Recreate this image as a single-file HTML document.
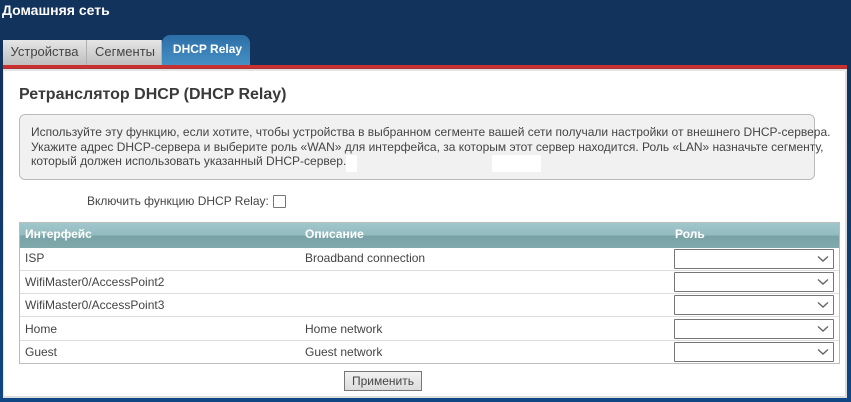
<!DOCTYPE html>
<html lang="ru"><head><meta charset="utf-8"><title>Домашняя сеть</title>
<style>
html,body{margin:0;padding:0}
body{width:851px;height:402px;position:relative;overflow:hidden;font-family:"Liberation Sans",Arial,sans-serif;font-size:12px;color:#444;background:linear-gradient(#12335c 0,#12335c 110px,#0f4684 402px)}
div,span{position:absolute;white-space:nowrap;box-sizing:border-box}
.tab{top:40px;height:25px;line-height:24px;text-align:center;font-size:13px;color:#444;background:linear-gradient(#e6e6e6,#bfbfbf);border-right:1px solid #b0b0b0}
.hd{top:223px;height:25px;line-height:23px;font-weight:bold;color:#fff}
.c{line-height:16px;color:#444}
.ln{left:20px;width:819px;height:1px;background:#ddd}
.sel{left:674px;width:160px;height:20px;border:1px solid #767676;border-radius:1px;background:#fff}
.sel svg{position:absolute;right:3px;top:5px}
.hl{background:#fff}
</style></head><body>
<div style="left:2px;top:2px;font-weight:bold;font-size:14px;line-height:16px;color:#fff">Домашняя сеть</div>

<div class="tab" style="left:3px;width:84px">Устройства</div>
<div class="tab" style="left:87px;width:75px;padding-left:2px">Сегменты</div>
<div style="left:162px;top:35px;width:88px;height:30px;border-radius:8px 8px 0 0;background:linear-gradient(#2c6ea6,#4690c6);color:#fff;font-weight:bold;text-align:center;line-height:29px;padding-left:3px">DHCP Relay</div>

<div style="left:3px;top:65px;width:844px;height:333px;background:#fff;border-right:2px solid #dcdcdc;border-bottom:2px solid #dcdcdc;border-left:1px solid #e6e6e6"></div>
<div style="left:3px;top:65px;width:844px;height:4px;background:#c9302f;border-bottom:1px solid #a33"></div>
<div style="left:3px;top:69px;width:844px;height:2px;background:#e4e4e4"></div>

<div style="left:19px;top:86px;font-size:16px;font-weight:bold;line-height:18px;color:#3a3a3a">Ретранслятор DHCP (DHCP Relay)</div>

<div style="left:19px;top:114px;width:796px;height:66px;background:#f1f1f1;border:1px solid #bbb;border-radius:6px"></div>
<div class="hl" style="left:825px;top:140px;width:7px;height:14px"></div>
<div class="hl" style="left:346px;top:155px;width:11px;height:17px"></div>
<div class="hl" style="left:492px;top:155px;width:49px;height:17px"></div>
<div class="c" style="left:31px;top:125px;line-height:14.5px">Используйте эту функцию, если хотите, чтобы устройства в выбранном сегменте вашей сети получали настройки от внешнего DHCP-сервера.<br>Укажите адрес DHCP-сервера и выберите роль «WAN» для интерфейса, за которым этот сервер находится. Роль «LAN» назначьте сегменту,<br>который должен использовать указанный DHCP-сервер.</div>

<div class="c" style="left:87px;top:193px">Включить функцию DHCP Relay:</div>
<div style="left:273px;top:195px;width:13px;height:13px;border:1px solid #767676;border-radius:1px;background:#fff"></div>

<div style="left:19px;top:222px;width:821px;height:142px;border:1px solid #bdbdbd"></div>
<div style="left:20px;top:223px;width:819px;height:25px;background:linear-gradient(#a0c8cb 0,#93bcc0 48%,#78a2a5 52%,#80a9ac 100%)"></div>
<div class="hd" style="left:25px">Интерфейс</div>
<div class="hd" style="left:305px">Описание</div>
<div class="hd" style="left:675px">Роль</div>

<div class="ln" style="top:270px"></div>
<div class="ln" style="top:293px"></div>
<div class="ln" style="top:316px"></div>
<div class="ln" style="top:340px"></div>

<div class="c" style="left:25px;top:250px">ISP</div>
<div class="c" style="left:305px;top:250px">Broadband connection</div>
<div class="c" style="left:25px;top:274px">WifiMaster0/AccessPoint2</div>
<div class="c" style="left:25px;top:297px">WifiMaster0/AccessPoint3</div>
<div class="c" style="left:25px;top:321px">Home</div>
<div class="c" style="left:305px;top:321px">Home network</div>
<div class="c" style="left:25px;top:344px">Guest</div>
<div class="c" style="left:305px;top:344px">Guest network</div>

<div class="sel" style="top:249px"><svg width="14" height="8" viewBox="0 0 14 8"><path d="M2 1.5 7 6 12 1.5" fill="none" stroke="#666" stroke-width="1.4"/></svg></div>
<div class="sel" style="top:272px"><svg width="14" height="8" viewBox="0 0 14 8"><path d="M2 1.5 7 6 12 1.5" fill="none" stroke="#666" stroke-width="1.4"/></svg></div>
<div class="sel" style="top:295px"><svg width="14" height="8" viewBox="0 0 14 8"><path d="M2 1.5 7 6 12 1.5" fill="none" stroke="#666" stroke-width="1.4"/></svg></div>
<div class="sel" style="top:319px"><svg width="14" height="8" viewBox="0 0 14 8"><path d="M2 1.5 7 6 12 1.5" fill="none" stroke="#666" stroke-width="1.4"/></svg></div>
<div class="sel" style="top:342px"><svg width="14" height="8" viewBox="0 0 14 8"><path d="M2 1.5 7 6 12 1.5" fill="none" stroke="#666" stroke-width="1.4"/></svg></div>

<div style="left:344px;top:371px;width:78px;height:20px;border:1px solid #777;background:linear-gradient(#f2f2f2,#dcdcdc);text-align:center;line-height:18px;color:#444">Применить</div>
</body></html>
